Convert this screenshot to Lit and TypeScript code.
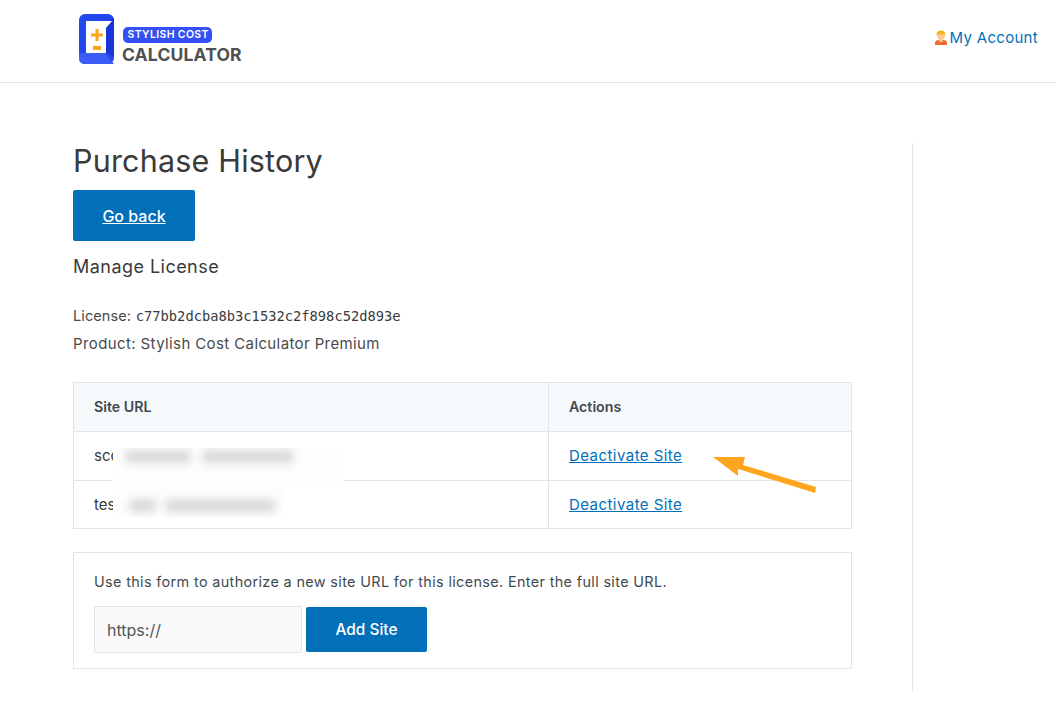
import { LitElement, html, css } from "lit";
import { customElement } from "lit/decorators.js";

@customElement("app-root")
export class AppRoot extends LitElement {
  static styles = css`
    :host { display: block; height: 722px; overflow: hidden; background: #fff; font-family: "Inter", "Liberation Sans", sans-serif; color: #3a3a3a; font-size: 15px; }
    * { box-sizing: border-box; }
    a { color: #0170b9; }
    .top { height: 83px; border-bottom: 1px solid #e4e4e4; display: flex; align-items: center; justify-content: space-between; padding: 0 18px 4px 79px; }
    .logo { display: flex; align-items: center; gap: 9px; }
    .logo-words { display: flex; flex-direction: column; align-items: flex-start; gap: 2px; padding-top: 13px; margin-left: -1px; }
    .pill { background: #3350f2; color: #fff; font: 600 10.5px/14px "Inter", sans-serif; letter-spacing: .35px; padding: 0 0 0 4.5px; margin-left: 1px; border-radius: 5px; height: 16px; display: flex; align-items: center; width: 89px; white-space: nowrap; }
    .calc { font: 700 17.5px/20px "Inter", sans-serif; color: #505050; letter-spacing: .15px; }
    .acct { display: flex; align-items: center; gap: 2px; color: #0170b9; text-decoration: none; font-size: 15px; letter-spacing: .3px; margin-bottom: 3px; }
    .wrap { display: flex; padding: 59px 0 0 73px; }
    .main { width: 779px; position: relative; }
    .side { margin: 1px 0 0 60px; width: 1px; height: 549px; background: #e4e4e4; }
    h1 { margin: 0; font-weight: 400; font-size: 30.5px; line-height: 38px; color: #3a3a3a; letter-spacing: .2px; }
    .back { display: flex; width: 122px; height: 51px; margin-top: 10px; align-items: center; justify-content: center; background: #0170b9; color: #fff; border-radius: 2px; font-weight: 500; font-size: 16px; }
    .manage { font-size: 18px; line-height: 26px; margin-top: 13px; color: #3a3a3a; letter-spacing: .46px; }
    .meta { margin-top: 22px; font-size: 15px; line-height: 27px; letter-spacing: .39px; color: #4a4a4a; }
    .label { font-size: 14.5px; letter-spacing: .1px; }
    code { font-family: "DejaVu Sans Mono", monospace; font-size: 13.75px; color: #3a3a3a; letter-spacing: 0; }
    table { margin-top: 25px; width: 779px; border-collapse: collapse; table-layout: fixed; font-size: 15px; }
    th, td { border: 1px solid #e2e5e8; padding: 0 20px 1px; height: 49px; text-align: left; font-weight: 400; }
    tr:last-child td { height: 48px; padding-bottom: 0; }
    th { background: #f5f9fc; font-weight: 600; color: #3f4a50; font-size: 14.2px; }
    td:first-child, th:first-child { width: 475px; }
    td a { letter-spacing: .45px; }
    .blur { position: absolute; left: 40px; top: 306px; width: 230px; height: 70px; background: #fdfdfd; overflow: hidden; clip-path: polygon(0 0, 100% 0, 100% 40px, 170px 40px, 170px 100%, 0 100%); }
    .smear { position: absolute; background: #d6d8da; filter: blur(4.5px); height: 13px; border-radius: 5px; }
    .s1 { left: 12px; top: 2px; width: 66px; }
    .s2 { left: 89px; top: 2px; width: 92px; }
    .s3 { left: 16px; top: 51px; width: 27px; }
    .s4 { left: 52px; top: 51px; width: 110px; }
    .form { margin-top: 23px; border: 1px solid #e2e5e8; height: 117px; padding: 19px 20px 0; }
    .form p { margin: 0; font-size: 14.4px; line-height: 20px; color: #3f4a50; letter-spacing: .36px; }
    .row { display: flex; align-items: center; gap: 4px; margin-top: 14px; }
    .field { width: 208px; height: 47px; background: #fafafa; border: 1px solid #e3e3e3; border-radius: 2px; display: flex; align-items: center; padding: 0 12px; font-size: 16px; color: #555; }
    .add { width: 121px; height: 45px; background: #0170b9; color: #fff; border-radius: 2px; display: flex; align-items: center; justify-content: center; font-weight: 500; font-size: 15.4px; }
    .arrow { position: absolute; left: 638px; top: 312px; }
  `;

  render() {
    return html`
      <header class="top">
        <div class="logo">
          <svg width="35" height="50" viewBox="0 0 35 50">
            <rect width="35" height="50" rx="6" fill="#2347ee"/>
            <path d="M26 9 L35 4 V42 L26 39 Z" fill="#1a35d6"/>
            <path d="M0 39 H26 L35 50 H6 Q0 50 0 44 Z" fill="#3b5cf5"/>
            <path d="M7 7 H33 L27 14 V39 H7 Z" fill="#fff"/>
            <path d="M12 21 H24 M18 15 V27" stroke="#f9a51a" stroke-width="3"/>
            <path d="M14 34 H22" stroke="#f9a51a" stroke-width="4"/>
          </svg>
          <div class="logo-words">
            <div class="pill">STYLISH COST</div>
            <div class="calc">CALCULATOR</div>
          </div>
        </div>
        <a class="acct">
          <svg width="14" height="15" viewBox="0 0 14 15">
            <path d="M1 15 V13 Q1 10.5 4 10 H10 Q13 10.5 13 13 V15 Z" fill="#ef6a2c"/>
            <rect x="5" y="8" width="4" height="4" fill="#f6c48c"/>
            <circle cx="7" cy="5.4" r="4" fill="#fbc98b"/>
            <path d="M2.6 6 Q2 .5 7 .5 Q12 .5 11.4 6 L10.4 4 Q7 4.4 3.6 4 Z" fill="#f9ad1e"/>
          </svg>
          My Account
        </a>
      </header>
      <div class="wrap">
        <main class="main">
          <h1>Purchase History</h1>
          <a class="back" href="#">Go back</a>
          <div class="manage">Manage License</div>
          <div class="meta">
            <div><span class="label">License:</span> <code>c77bb2dcba8b3c1532c2f898c52d893e</code></div>
            <div>Product: Stylish Cost Calculator Premium</div>
          </div>
          <table>
            <tr><th>Site URL</th><th>Actions</th></tr>
            <tr><td>scc</td><td><a href="#">Deactivate Site</a></td></tr>
            <tr><td>test</td><td><a href="#">Deactivate Site</a></td></tr>
          </table>
          <div class="blur">
            <div class="smear s1"></div><div class="smear s2"></div>
            <div class="smear s3"></div><div class="smear s4"></div>
          </div>
          <svg class="arrow" width="110" height="50" viewBox="0 0 110 50">
            <path d="M2 3 H34 L32 11 L105 33 L104 39 L27 15 L27 22 Z" fill="#ffa51f"/>
          </svg>
          <div class="form">
            <p>Use this form to authorize a new site URL for this license. Enter the full site URL.</p>
            <div class="row">
              <div class="field">https://</div>
              <div class="add">Add Site</div>
            </div>
          </div>
        </main>
        <div class="side"></div>
      </div>
    `;
  }
}
